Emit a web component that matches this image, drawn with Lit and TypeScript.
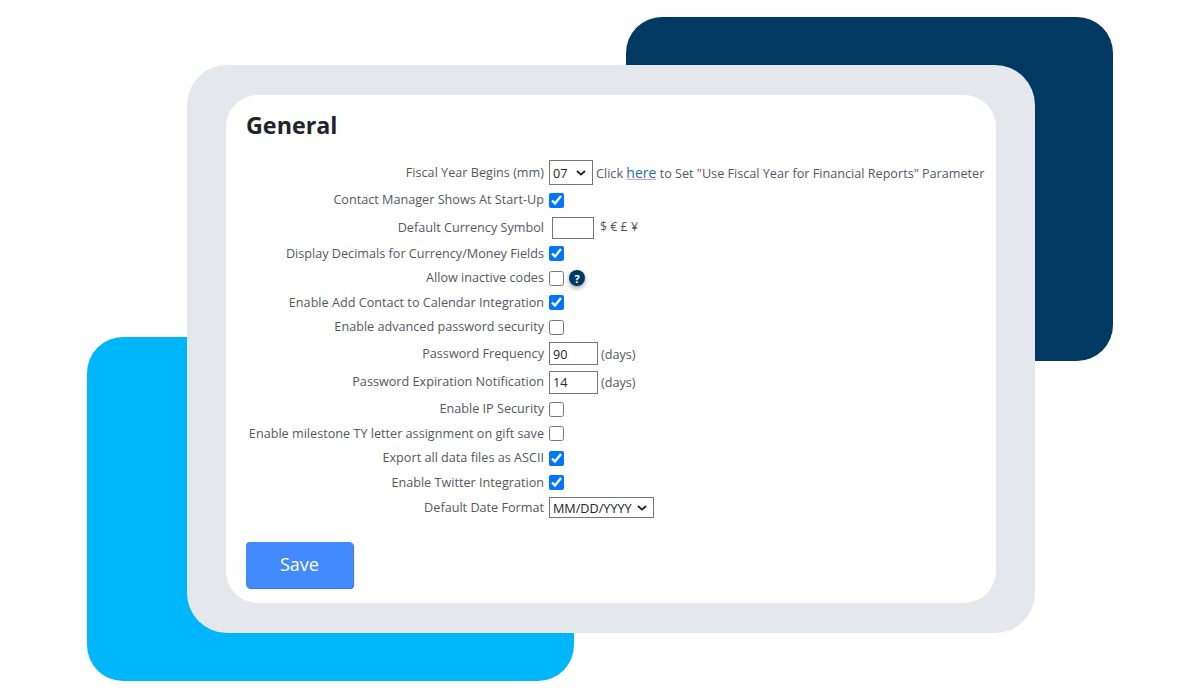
import { LitElement, html, css } from "lit";
import { customElement } from "lit/decorators.js";

type Kind = "plain" | "tall" | "freq" | "exp" | "ip" | "last";
interface Row {
  label: string;
  kind: Kind;
  control: unknown;
}

const check = (on: boolean) => html`<input class="cb" type="checkbox" ?checked=${on} />`;

@customElement("app-root")
export class AppRoot extends LitElement {
  static styles = css`
    :host { display: block; width: 1200px; height: 698px; background: #fff; overflow: hidden; position: relative; font-family: "Open Sans", sans-serif; }
    .blob { position: absolute; width: 487px; height: 344px; border-radius: 36px; }
    .navy { left: 626px; top: 17px; background: #003a63; }
    .cyan { left: 87px; top: 337px; background: #00b6fb; }
    .frame { position: absolute; left: 187px; top: 65px; width: 848px; height: 568px; box-sizing: border-box; padding: 30px 39px; background: #e4e8ec; border-radius: 40px; }
    .card { height: 508px; box-sizing: border-box; padding: 14px 20px 0; background: #fff; border-radius: 32px; display: flex; flex-direction: column; }
    h1 { margin: 0 0 17px; font-size: 23.3px; line-height: 33px; font-weight: 700; color: #212529; }
    .rows { display: flex; flex-direction: column; }
    .row { display: grid; grid-template-columns: 298px 1fr; column-gap: 5px; align-items: center; height: 24.5px; font-size: 12.65px; color: #55595e; }
    .row.tall { height: 27.5px; }
    .row.freq { height: 28px; }
    .row.exp { height: 29px; }
    .row.ip { height: 25px; }
    .row.last { height: 25.5px; }
    .label { text-align: right; white-space: nowrap; transform: translateY(-1px); }
    .ctl { display: flex; align-items: center; white-space: nowrap; }
    .cb { width: 15px; height: 15px; margin: 0; }
    select {
      appearance: none;
      font-family: "Open Sans", sans-serif; font-size: 12.65px; color: #212529; height: 25px;
      background: #fff url("data:image/svg+xml,%3Csvg xmlns='http://www.w3.org/2000/svg' width='10' height='6' viewBox='0 0 10 6'%3E%3Cpath d='M1 1l4 3.6L9 1' fill='none' stroke='%23222' stroke-width='1.8'/%3E%3C/svg%3E") no-repeat right 6px center;
      border: 1px solid #767676; border-radius: 0; padding: 0 0 0 3px; margin: 0;
    }
    .sel-month { width: 44px; }
    .sel-date { width: 105px; height: 21px; }
    .note { margin-left: 3px; }
    a { color: #1f6f9f; text-decoration: underline; text-decoration-color: #d9a0c0; font-size: 14px; }
    .num { box-sizing: border-box; width: 49px; height: 23px; padding: 0 3px; margin: 0; border: 1px solid #767676; border-radius: 0; font-family: "Open Sans", sans-serif; font-size: 12.65px; color: #212529; }
    .cur { width: 42px; height: 22px; margin-left: 3px; }
    .sym { margin-left: 6px; font-size: 12.4px; transform: translateY(-1px); }
    .help { display: inline-flex; align-items: center; justify-content: center; width: 16px; height: 16px; margin-left: 5px; border-radius: 50%; background: #003a63; color: #fff; font-size: 11px; font-weight: 700; line-height: 1; box-shadow: 0 2px 5px rgba(0, 0, 0, 0.4); }
    .save { align-self: flex-start; width: 107px; height: 46px; margin-top: 21px; border: 0; border-radius: 4px; background: #448aff; color: #fff; font-family: "Open Sans", sans-serif; font-size: 18px; box-shadow: 1px 1px 1px #3a6db8; padding: 0 0 2px; }
  `;

  private rows(): Row[] {
    return [
      { label: "Fiscal Year Begins (mm)", kind: "tall", control: html`<select class="sel-month"><option>07</option></select><span class="note">Click <a href="#">here</a> to Set "Use Fiscal Year for Financial Reports" Parameter</span>` },
      { label: "Contact Manager Shows At Start-Up", kind: "tall", control: check(true) },
      { label: "Default Currency Symbol", kind: "tall", control: html`<input class="num cur" type="text" /><span class="sym">$ € £ ¥</span>` },
      { label: "Display Decimals for Currency/Money Fields", kind: "plain", control: check(true) },
      { label: "Allow inactive codes", kind: "plain", control: html`${check(false)}<span class="help">?</span>` },
      { label: "Enable Add Contact to Calendar Integration", kind: "plain", control: check(true) },
      { label: "Enable advanced password security", kind: "plain", control: check(false) },
      { label: "Password Frequency", kind: "freq", control: html`<input class="num" type="text" value="90" /><span class="note">(days)</span>` },
      { label: "Password Expiration Notification", kind: "exp", control: html`<input class="num" type="text" value="14" /><span class="note">(days)</span>` },
      { label: "Enable IP Security", kind: "ip", control: check(false) },
      { label: "Enable milestone TY letter assignment on gift save", kind: "plain", control: check(false) },
      { label: "Export all data files as ASCII", kind: "plain", control: check(true) },
      { label: "Enable Twitter Integration", kind: "plain", control: check(true) },
      { label: "Default Date Format", kind: "last", control: html`<select class="sel-date"><option>MM/DD/YYYY</option></select>` },
    ];
  }

  render() {
    return html`
      <div class="blob navy"></div>
      <div class="blob cyan"></div>
      <div class="frame">
        <div class="card">
          <h1>General</h1>
          <div class="rows">
            ${this.rows().map(
              (r) => html`<div class="row ${r.kind}"><span class="label">${r.label}</span><span class="ctl">${r.control}</span></div>`
            )}
          </div>
          <button class="save">Save</button>
        </div>
      </div>
    `;
  }
}
